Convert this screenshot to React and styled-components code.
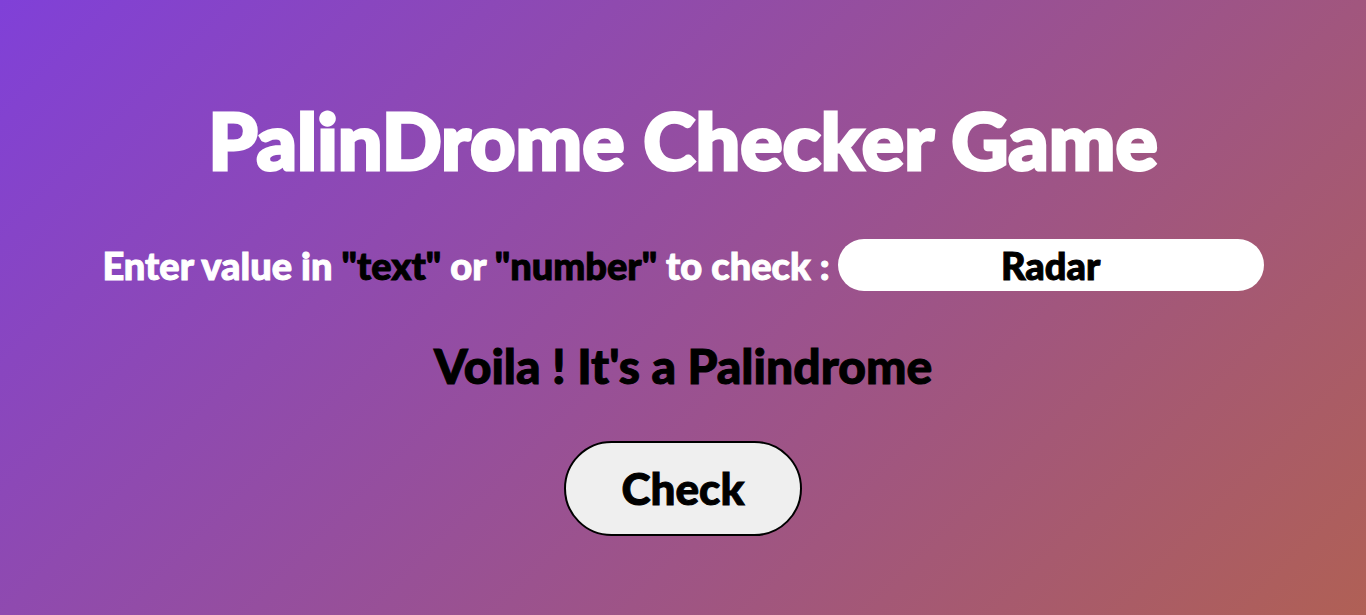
import React, { useState } from "react";
import styled, { createGlobalStyle } from "styled-components";

const GlobalStyle = createGlobalStyle`
  * { box-sizing: border-box; }
  body {
    margin: 0;
    font-family: "Fredoka One", Lato, "Open Sans", sans-serif;
    font-weight: 900;
    -webkit-text-stroke: 1px;
    stroke-linejoin: round;
  }
`;

const Page = styled.main`
  min-height: 100vh;
  padding: 90px 24px 80px;
  display: flex;
  flex-direction: column;
  align-items: center;
  background: linear-gradient(135deg, #8040d8, #b06055);
  color: #fff;
`;

const Title = styled.h1`
  margin: 0 0 50px;
  font-size: 79px;
  line-height: 99px;
  font-weight: 900;
  text-align: center;
  -webkit-text-stroke: 3px;
`;

const Field = styled.div`
  display: flex;
  align-items: center;
  justify-content: center;
  gap: 8px;
  margin-bottom: 44px;
  font-size: 38px;
  line-height: 52px;
`;

const Label = styled.label`
  white-space: nowrap;
`;

const Accent = styled.span`
  color: #000;
`;

const ValueInput = styled.input`
  width: 426px;
  height: 52px;
  padding: 0 16px;
  border: 0;
  border-radius: 26px;
  background: #fff;
  color: #000;
  font: inherit;
  text-align: center;
  -webkit-text-stroke: 1px;
`;

const Result = styled.p`
  margin: 0 0 44px;
  min-height: 62px;
  color: #000;
  font-size: 48px;
  line-height: 62px;
`;

const CheckButton = styled.button`
  width: 238px;
  height: 95px;
  padding: 0 16px 2px;
  border: 2px solid #000;
  border-radius: 48px;
  background: #efefef;
  color: #000;
  font: inherit;
  font-size: 44px;
  -webkit-text-stroke: 1px;
`;

const isPalindrome = (value) => {
  const text = value.toLowerCase();
  return text === [...text].reverse().join("");
};

const messageFor = (value) =>
  isPalindrome(value) ? "Voila ! It's a Palindrome" : "Oops ! Not a Palindrome";

export default function App() {
  const [value, setValue] = useState("Radar");
  const [message, setMessage] = useState(messageFor("Radar"));

  return (
    <>
      <GlobalStyle />
      <Page>
        <Title>PalinDrome Checker Game</Title>
        <Field>
          <Label htmlFor="value">
            Enter value in <Accent>"text"</Accent> or <Accent>"number"</Accent> to check :
          </Label>
          <ValueInput
            id="value"
            type="text"
            value={value}
            onChange={(event) => setValue(event.target.value)}
          />
        </Field>
        <Result>{message}</Result>
        <CheckButton type="button" onClick={() => setMessage(messageFor(value))}>
          Check
        </CheckButton>
      </Page>
    </>
  );
}
